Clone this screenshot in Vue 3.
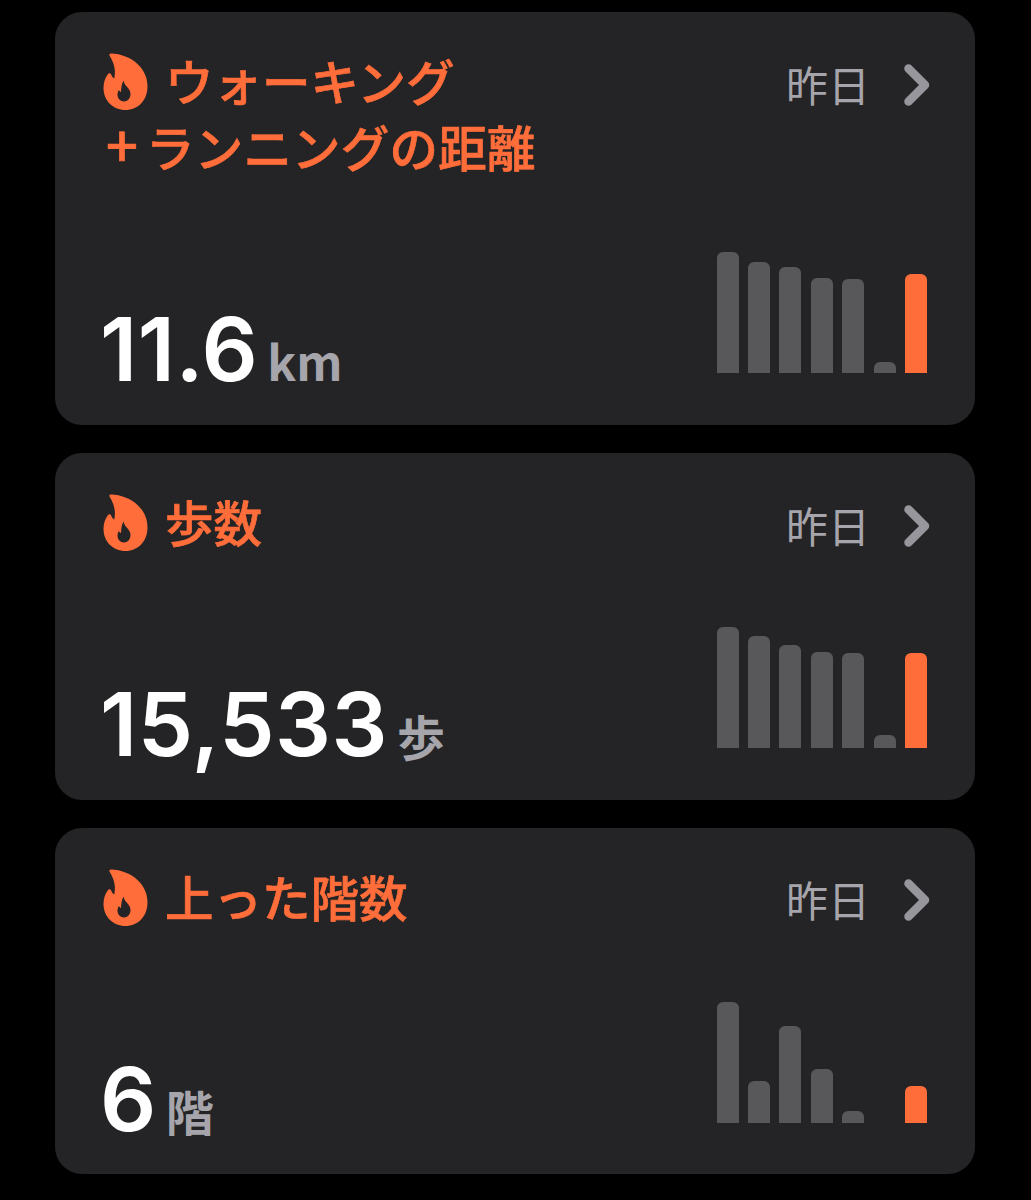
<script setup>
const cards = [
  {
    title: 'ウォーキング',
    extra: 'ランニングの距離',
    value: '11.6',
    unit: 'km',
    bars: [121, 111, 106, 95, 94, 11, 99],
    tall: true,
  },
  {
    title: '歩数',
    value: '15,533',
    unit: '歩',
    bars: [121, 112, 103, 96, 95, 13, 95],
  },
  {
    title: '上った階数',
    value: '6',
    unit: '階',
    bars: [121, 42, 97, 54, 12, 0, 37],
  },
]
</script>

<template>
  <div class="page">
    <div v-for="card in cards" :key="card.value" class="card" :class="{ tall: card.tall }">
      <div class="head">
        <h2 class="title">
          <svg class="flame" viewBox="0 0 44 57">
            <path
              fill-rule="evenodd"
              d="M6 2.500C5.400 1.300 6.300 0.500 8 0.600C17 0.900 27 4.500 34 11C40.500 17 44 24.500 44 33.500C44 47.500 34.500 57 22 57C9.500 57 0 47.500 0 35C0 29.500 1.700 24.800 4.500 21C5.500 19.700 7 20 7.500 21.300C8.100 23 9.300 24.700 10.800 25.500C11.800 20 12.300 12.500 6 2.500ZM20 27.500C20.500 31 22.500 32.500 24.500 35C26 36.800 27 38.800 27 41C27 45.500 24 48.500 20.500 48.500C16.800 48.500 14 45.500 14 41.800C14 40 14.500 38.500 15.300 37C16 38 16.700 38.800 17.500 39C17.800 35 18 31 20 27.500Z"
            />
          </svg>
          <span>{{ card.title }}</span>
          <span v-if="card.extra" class="second"><span class="plus">+</span>{{ card.extra }}</span>
        </h2>
        <div class="when">
          <span>昨日</span>
          <svg class="chevron" viewBox="0 0 26 42">
            <path d="M4.500 4.500L21 21L4.500 37.500" />
          </svg>
        </div>
      </div>
      <div class="foot">
        <div class="reading">
          <span class="value">{{ card.value }}</span>
          <span class="unit">{{ card.unit }}</span>
        </div>
        <div class="bars">
          <span
            v-for="(h, i) in card.bars"
            :key="i"
            class="bar"
            :class="{ now: i === 6 }"
            :style="{ height: h + 'px' }"
          ></span>
        </div>
      </div>
    </div>
  </div>
</template>

<style scoped>
.page {
  display: flex;
  flex-direction: column;
  gap: 28px;
  padding: 12px 56px 0 55px;
  height: 1200px;
  box-sizing: border-box;
  background: #000;
  font-family: "Noto Sans CJK JP", sans-serif;
}

.card {
  display: flex;
  flex-direction: column;
  justify-content: space-between;
  height: 346.5px;
  box-sizing: border-box;
  padding: 35px 48px 51.5px 48px;
  background: #242426;
  border-radius: 27px;
}

.card.tall {
  height: 413px;
  padding-bottom: 52px;
}

.head {
  display: flex;
  justify-content: space-between;
  align-items: flex-start;
}

.title {
  margin: 0;
  font-size: 48.5px;
  font-weight: 500;
  line-height: 66px;
  color: #ff6d3a;
  -webkit-text-stroke: 0.7px #ff6d3a;
}

.flame {
  width: 45px;
  height: 57px;
  fill: #ff6d3a;
  vertical-align: -9px;
  margin-right: 17px;
}

.second {
  display: block;
  margin-left: 3px;
  letter-spacing: 0.2px;
}

.plus {
  display: inline-block;
  width: 40px;
  font-size: 56px;
  line-height: 0;
}

.when {
  display: flex;
  align-items: center;
  height: 66px;
  margin: 3px -3px 0 0;
  font-size: 42px;
  color: #a5a5ab;
}

.chevron {
  width: 26px;
  height: 42px;
  margin: 3px 0 0 34px;
  fill: none;
  stroke: #96969c;
  stroke-width: 8.500;
  stroke-linecap: round;
  stroke-linejoin: round;
}

.foot {
  display: flex;
  justify-content: space-between;
  align-items: flex-end;
}

.reading {
  display: flex;
  align-items: baseline;
  gap: 9px;
  color: #fff;
  line-height: 1;
  margin: 0 0 -20px -3px;
}

.value {
  font-family: Inter, sans-serif;
  font-size: 88px;
  font-weight: 600;
  letter-spacing: 0.500px;
}

.unit {
  font-size: 48px;
  font-weight: 700;
  color: #a5a5ab;
}

.bars {
  display: flex;
  align-items: flex-end;
  gap: 9.400px;
}

.bar {
  width: 22px;
  border-radius: 6px 6px 0 0;
  background: #58585a;
}

.bar.now {
  background: #ff6d3a;
}
</style>

<style>
html, body {
  background: #000;
}
</style>
